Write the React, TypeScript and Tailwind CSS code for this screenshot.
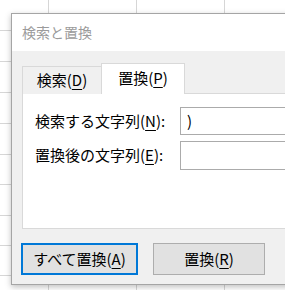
import React from 'react';

const rows = [31, 31, 31, 31, 31, 30, 31, 30, 30, 30];
const cols = [49, 88, 88, 88];

const font = { fontFamily: '"Noto Sans CJK JP", "Noto Sans", sans-serif' };

const Key: React.FC<{ k: string }> = ({ k }) => (
  <span className="underline decoration-1 underline-offset-[3px]">{k}</span>
);

export default function App() {
  return (
    <div className="relative w-[285px] h-[290px] overflow-hidden bg-white" style={font}>
      {/* spreadsheet behind */}
      <div className="flex flex-col">
        {rows.map((h, i) => (
          <div key={i} className="flex">
            {cols.map((w, j) => (
              <div
                key={j}
                className="border-r border-b border-[#d6d6d6] shrink-0"
                style={{ width: w, height: h }}
              />
            ))}
          </div>
        ))}
      </div>

      {/* dialog */}
      <div className="absolute left-[11px] top-[13px] w-[330px] h-[272px] flex flex-col border border-[#a5a5a5] bg-[#f0f0f0] shadow-[0_2px_6px_rgba(0,0,0,0.25)]">
        <div className="h-[37px] bg-white flex items-center pl-[10px] text-[14px] text-[#9b9b9b]">
          検索と置換
        </div>

        <div className="flex-1 pl-[10px] pt-[11px]">
          <div className="flex items-end h-[31px] relative z-10 text-[15px] text-black">
            <div className="w-[79px] h-[28px] border-t border-l border-[#d9d9d9] bg-[#f0f0f0] flex items-center justify-center -mb-px pb-px">
              <span>
                検索(<Key k="D" />)
              </span>
            </div>
            <div className="w-[84px] h-[31px] border-t border-l border-r border-[#d9d9d9] bg-white flex items-center justify-center -mb-px">
              <span className="pb-[2px]">
                置換(<Key k="P" />)
              </span>
            </div>
          </div>

          <div className="h-[136px] border border-[#d9d9d9] bg-white pl-[12px] pt-[13px] flex flex-col gap-[6px] text-[15px] text-black">
            <div className="flex items-center">
              <div className="w-[145px] shrink-0">
                検索する文字列(<Key k="N" />):
              </div>
              <div className="flex-1 h-[28px] border border-[#ababab] bg-white flex items-center pl-[6px]">
                )
              </div>
            </div>
            <div className="flex items-center">
              <div className="w-[145px] shrink-0">
                置換後の文字列(<Key k="E" />):
              </div>
              <div className="flex-1 h-[29px] border border-[#ababab] bg-white" />
            </div>
          </div>

          <div className="flex gap-[15px] mt-[14px] -ml-px text-[15px] text-black">
            <button className="w-[117px] h-[32px] border-2 border-[#0078d7] bg-[#e1e1e1] flex items-center justify-center">
              すべて置換(<Key k="A" />)
            </button>
            <button className="w-[112px] h-[32px] border border-[#adadad] bg-[#e1e1e1] flex items-center justify-center">
              置換(<Key k="R" />)
            </button>
          </div>
        </div>
      </div>
    </div>
  );
}
